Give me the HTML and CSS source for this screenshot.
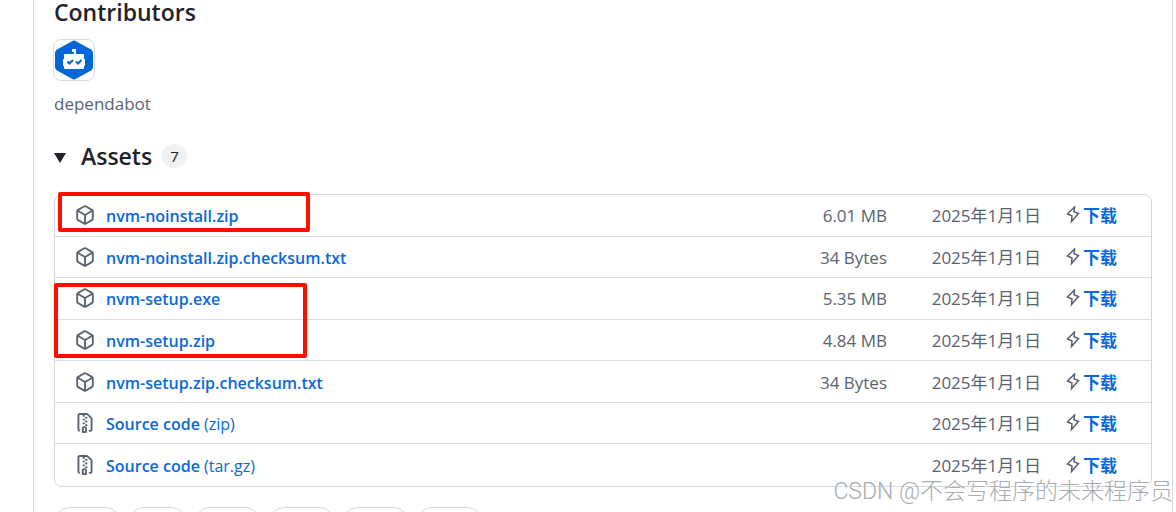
FILE: index.html
```html
<!DOCTYPE html>
<html lang="zh-CN">
<head>
<meta charset="utf-8">
<title>Release assets</title>
<link rel="stylesheet" href="styles.css">
</head>
<body>
<svg class="sprite" aria-hidden="true">
  <symbol id="package" viewBox="0 0 16 16"><path d="m8.878.392 5.25 3.045c.54.314.872.89.872 1.514v6.098a1.75 1.75 0 0 1-.872 1.514l-5.25 3.045a1.75 1.75 0 0 1-1.756 0l-5.25-3.045A1.75 1.75 0 0 1 1 11.049V4.951c0-.624.332-1.201.872-1.514L7.122.392a1.75 1.75 0 0 1 1.756 0ZM7.875 1.69l-4.63 2.685L8 7.133l4.755-2.758-4.63-2.685a.248.248 0 0 0-.25 0ZM2.5 5.677v5.372c0 .09.047.171.125.216l4.625 2.683V8.432Zm6.25 8.271 4.625-2.683a.25.25 0 0 0 .125-.216V5.677L8.75 8.432Z"/></symbol>
  <symbol id="file-zip" viewBox="0 0 16 16"><path d="M3.5 1.75v11.5c0 .09.048.173.126.217a.75.75 0 0 1-.752 1.298A1.748 1.748 0 0 1 2 13.25V1.75C2 .784 2.784 0 3.75 0h5.586c.464 0 .909.185 1.237.513l2.914 2.914c.329.328.513.773.513 1.237v8.586A1.75 1.75 0 0 1 12.25 15h-.5a.75.75 0 0 1 0-1.5h.5a.25.25 0 0 0 .25-.25V4.664a.25.25 0 0 0-.073-.177L9.513 1.573a.25.25 0 0 0-.177-.073H7.25a.75.75 0 0 1 0 1.5h-.5a.75.75 0 0 1 0-1.5h-3a.25.25 0 0 0-.25.25Zm3.75 8.75h.5c.966 0 1.75.784 1.75 1.75v3a.75.75 0 0 1-.75.75h-2.5a.75.75 0 0 1-.75-.75v-3c0-.966.784-1.75 1.75-1.75ZM6 5.25a.75.75 0 0 1 .75-.75h.5a.75.75 0 0 1 0 1.5h-.5A.75.75 0 0 1 6 5.25Zm.75 2.25h.5a.75.75 0 0 1 0 1.5h-.5a.75.75 0 0 1 0-1.5ZM8 6.75A.75.75 0 0 1 8.75 6h.5a.75.75 0 0 1 0 1.5h-.5A.75.75 0 0 1 8 6.75ZM8.75 3h.5a.75.75 0 0 1 0 1.5h-.5a.75.75 0 0 1 0-1.5ZM8 9.75A.75.75 0 0 1 8.75 9h.5a.75.75 0 0 1 0 1.5h-.5A.75.75 0 0 1 8 9.75Zm-1 2.5v2.25h1v-2.25a.25.25 0 0 0-.25-.25h-.5a.25.25 0 0 0-.25.25Z"/></symbol>
  <symbol id="bolt" viewBox="0 0 14 18"><path d="M8.500 1 1.500 8 6 10 5.500 15.500 12.500 7.500 8 5.800Z" fill="none" stroke="currentColor" stroke-width="1.500"/></symbol>
</svg>
<main class="release">
  <h2 class="heading">Contributors</h2>
  <a class="avatar" href="#" aria-label="dependabot avatar">
    <svg viewBox="0 0 40 40" aria-hidden="true">
      <path d="M18 1.2Q20 0 22 1.2L37 9.5Q39 10.6 39 13V27Q39 29.4 37 30.5L22 38.8Q20 40 18 38.8L3 30.5Q1 29.4 1 27V13Q1 10.6 3 9.5Z" fill="#0366d6"/>
      <path d="M18 9H22V14H29Q30 14 30 15V19H31V26H30V28Q30 29 29 29H11Q10 29 10 28V26H9V19H10V15Q10 14 11 14H20V12H18Z" fill="#fff"/>
      <path d="m13.500 21.500 2 2 3.500-3.500M22 21.500l2 2 3.500-3.500" fill="none" stroke="#0366d6" stroke-width="2"/>
    </svg>
  </a>
  <p class="login">dependabot</p>
  <details class="assets" open>
    <summary class="summary">
      <svg class="caret" viewBox="0 0 12 14" aria-hidden="true"><path d="M0 4H12L6 14Z"/></svg>
      <span class="heading">Assets</span>
      <span class="counter">7</span>
    </summary>
    <div class="asset-box">
      <ul class="asset-list">
        <li class="asset"><svg class="icon"><use href="#package"/></svg><a class="name" href="#">nvm-noinstall.zip</a><span class="size">6.01 MB</span><span class="date">2025年1月1日</span><a class="download" href="#"><svg class="bolt"><use href="#bolt"/></svg>下载</a></li>
        <li class="asset"><svg class="icon"><use href="#package"/></svg><a class="name" href="#">nvm-noinstall.zip.checksum.txt</a><span class="size">34 Bytes</span><span class="date">2025年1月1日</span><a class="download" href="#"><svg class="bolt"><use href="#bolt"/></svg>下载</a></li>
        <li class="asset"><svg class="icon"><use href="#package"/></svg><a class="name" href="#">nvm-setup.exe</a><span class="size">5.35 MB</span><span class="date">2025年1月1日</span><a class="download" href="#"><svg class="bolt"><use href="#bolt"/></svg>下载</a></li>
        <li class="asset"><svg class="icon"><use href="#package"/></svg><a class="name" href="#">nvm-setup.zip</a><span class="size">4.84 MB</span><span class="date">2025年1月1日</span><a class="download" href="#"><svg class="bolt"><use href="#bolt"/></svg>下载</a></li>
        <li class="asset"><svg class="icon"><use href="#package"/></svg><a class="name" href="#">nvm-setup.zip.checksum.txt</a><span class="size">34 Bytes</span><span class="date">2025年1月1日</span><a class="download" href="#"><svg class="bolt"><use href="#bolt"/></svg>下载</a></li>
        <li class="asset"><svg class="icon"><use href="#file-zip"/></svg><a class="name" href="#">Source code <span class="format">(zip)</span></a><span class="size"></span><span class="date">2025年1月1日</span><a class="download" href="#"><svg class="bolt"><use href="#bolt"/></svg>下载</a></li>
        <li class="asset"><svg class="icon"><use href="#file-zip"/></svg><a class="name" href="#">Source code <span class="format">(tar.gz)</span></a><span class="size"></span><span class="date">2025年1月1日</span><a class="download" href="#"><svg class="bolt"><use href="#bolt"/></svg>下载</a></li>
      </ul>
      <div class="mark mark-first"></div>
      <div class="mark mark-second"></div>
    </div>
  </details>
  <div class="reactions">
    <button class="reaction" aria-label="thumbs up"></button>
    <button class="reaction reaction-short" aria-label="laugh"></button>
    <button class="reaction" aria-label="hooray"></button>
    <button class="reaction" aria-label="heart"></button>
    <button class="reaction" aria-label="rocket"></button>
    <button class="reaction" aria-label="eyes"></button>
  </div>
</main>
<div class="watermark">CSDN @不会写程序的未来程序员</div>
</body>
</html>
```

FILE: styles.css
```css
* { box-sizing: border-box; }
body {
  margin: 0;
  height: 100vh;
  overflow: hidden;
  position: relative;
  background: #fff;
  color: #1f2328;
  font: 17px/24px "Open Sans", "Noto Sans CJK SC", sans-serif;
}
.sprite { position: absolute; width: 0; height: 0; }
a { color: #0969da; text-decoration: none; }
.release {
  margin: 0 3px 0 33px;
  padding: 0 20px;
  min-height: 100vh;
  border: solid #d1d9e0;
  border-width: 0 1px;
}
.heading { margin: 0; font-size: 23px; line-height: 24px; font-weight: 600; }
.avatar {
  display: block;
  width: 42px;
  height: 42px;
  margin: 15px 0 0 -1px;
  border: 1px solid #d9dde1;
  border-radius: 8px;
}
.avatar svg { display: block; width: 40px; height: 40px; }
.login { margin: 11px 0 0; color: #59636e; }
.summary {
  display: flex;
  align-items: center;
  margin-top: 27px;
  height: 26px;
  list-style: none;
}
.caret { width: 12px; height: 14px; margin-right: 15px; fill: #1f2328; }
.counter {
  margin-left: 10px;
  min-width: 25px;
  border-radius: 12px;
  background: #eff1f3;
  font-size: 15px;
  text-align: center;
}
.asset-box { position: relative; margin-top: 25px; }
.asset-list {
  display: grid;
  grid-auto-rows: 1fr;
  min-height: 293px;
  margin: 0;
  padding: 0;
  list-style: none;
  border: 1px solid #d1d9e0;
  border-radius: 8px;
}
.asset {
  display: grid;
  grid-template-columns: 20px 1fr 120px 154px 76px;
  align-items: center;
  padding: 0 34px 0 20px;
  border-bottom: 1px solid #d9e0e6;
}
.asset:last-child { border-bottom: 0; }
.icon { width: 20px; height: 20px; fill: #59636e; }
.name, .size, .date, .download { padding-top: 2px; }
.name { padding-left: 11px; font-size: 16px; font-weight: 600; }
.format { font-weight: 400; }
.size, .date { color: #59636e; text-align: right; }
.download {
  display: flex;
  align-items: center;
  justify-content: flex-end;
  gap: 3px;
  font-weight: 700;
}
.bolt { width: 14px; height: 18px; margin-bottom: 2px; color: #59636e; }
.mark { position: absolute; border: 4px solid #ff0d00; border-radius: 2px; }
.mark-first { left: 4px; top: -2px; width: 252px; height: 40px; }
.mark-second { left: 0; top: 89px; width: 253px; height: 75px; }
.reactions { display: flex; gap: 7px; margin-top: 20px; }
.reaction {
  width: 67px;
  height: 32px;
  border: 1px solid #d1d9e0;
  border-radius: 16px;
  background: #fff;
}
.reaction-short { width: 59px; }
.watermark {
  position: absolute;
  right: 3px;
  bottom: 4px;
  color: #a9acae;
  font: 300 23px/32px Roboto, "Noto Sans CJK SC", sans-serif;
  text-shadow: 1px 1px 1px #fff;
}
```
